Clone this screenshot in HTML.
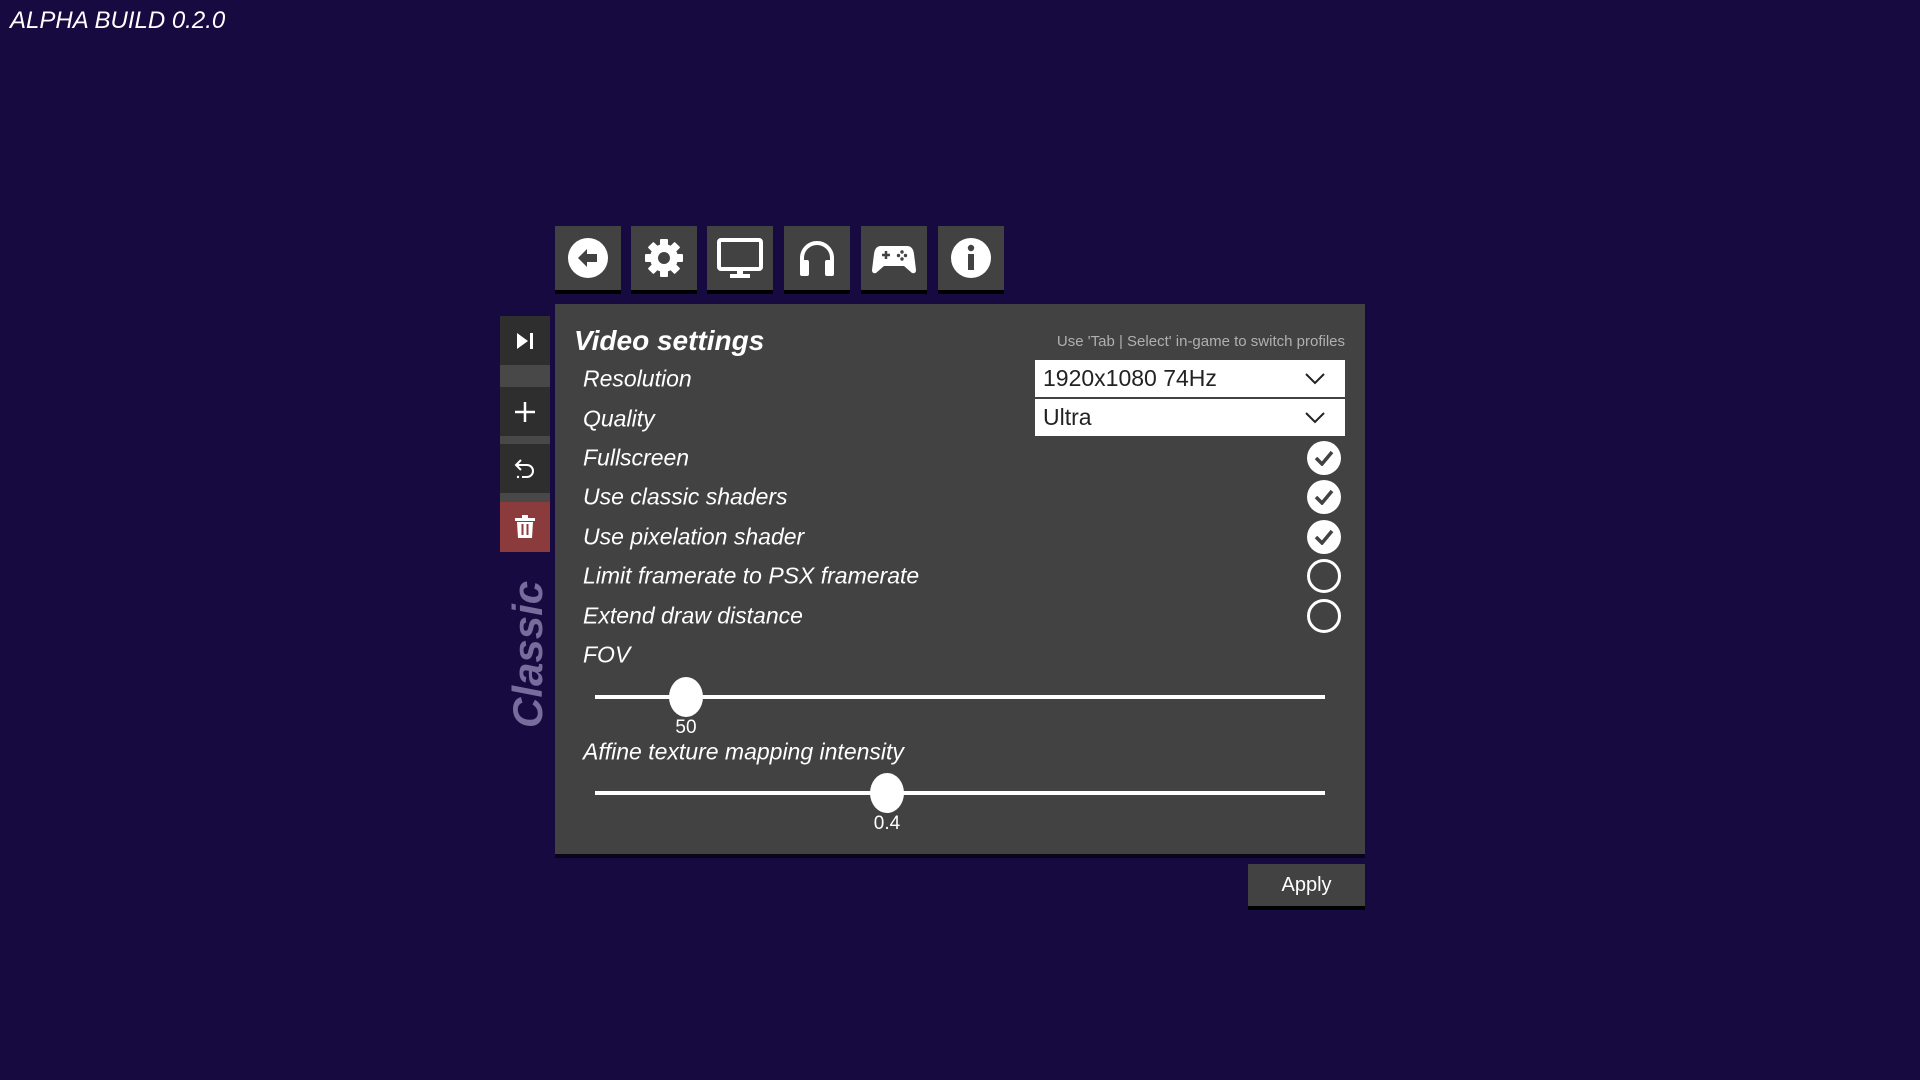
<!DOCTYPE html>
<html><head><meta charset="utf-8"><style>
*{margin:0;padding:0;box-sizing:border-box}
body{width:1920px;height:1080px;background:#170a40;position:relative;overflow:hidden;font-family:"Liberation Sans Narrow","Liberation Sans",sans-serif;color:#fff}
.abs{position:absolute}
.title{left:10px;top:7px;font-size:24px;font-style:italic;color:#fff}
.tab{top:226px;width:66px;height:68px;background:#424242;border-bottom:4px solid #000;display:flex;align-items:center;justify-content:center}
.panel{left:555px;top:304px;width:810px;height:554px;background:#424242;border-bottom:4px solid #0a0418}
.sb{left:500px;width:50px;background:#2e2e2e;display:flex;align-items:center;justify-content:center}
.lbl{left:583px;font-size:23px;font-style:italic;transform:translateY(-50%);white-space:nowrap}
.dd{left:1035px;width:310px;height:37px;background:#fff;color:#222;font-size:23px;padding-left:8px;line-height:37px}
.dd svg{position:absolute;right:20px;top:13px}
.cb{left:1307px;width:34px;height:34px;border-radius:50%;transform:translateY(-50%)}
.cb.on{background:#fff;display:flex;align-items:center;justify-content:center}
.cb.off{border:3px solid #fff}
.track{left:595px;width:730px;height:4px;background:#fff}
.thumb{width:34px;height:40px;border-radius:50%;background:#fff}
.val{font-size:19px;transform:translateX(-50%)}
</style></head><body>
<div class="abs title">ALPHA BUILD 0.2.0</div>

<div class="abs tab" style="left:555px"><svg width="44" height="44" viewBox="0 0 44 44"><circle cx="22" cy="22" r="20" fill="#fff"/><path d="M12 22 L21 13 L21 18 L31 18 L31 26 L21 26 L21 31 Z" fill="#424242"/></svg></div>
<div class="abs tab" style="left:631px"><svg width="44" height="44" viewBox="0 0 44 44"><g fill="#fff"><circle cx="22" cy="22" r="14"/><rect x="18" y="3" width="8" height="38" rx="1"/><rect x="18" y="3" width="8" height="38" rx="1" transform="rotate(45 22 22)"/><rect x="18" y="3" width="8" height="38" rx="1" transform="rotate(90 22 22)"/><rect x="18" y="3" width="8" height="38" rx="1" transform="rotate(135 22 22)"/></g><circle cx="22" cy="22" r="6" fill="#424242"/></svg></div>
<div class="abs tab" style="left:707px"><svg width="48" height="44" viewBox="0 0 48 44"><rect x="3" y="4" width="42" height="29" rx="2" fill="none" stroke="#fff" stroke-width="4"/><rect x="21" y="33" width="6" height="6" fill="#fff"/><rect x="14" y="38" width="20" height="4" fill="#fff"/></svg></div>
<div class="abs tab" style="left:784px"><svg width="44" height="44" viewBox="0 0 44 44"><path d="M7 36 V22 A15 15 0 0 1 37 22 V36" fill="none" stroke="#fff" stroke-width="4"/><rect x="5" y="24" width="9" height="16" rx="2" fill="#fff"/><rect x="30" y="24" width="9" height="16" rx="2" fill="#fff"/></svg></div>
<div class="abs tab" style="left:861px"><svg width="46" height="40" viewBox="0 0 46 40"><path d="M10 8 H36 Q42 8 43 16 L45 32 Q45 36 41 35 L33 28 H13 L5 35 Q1 36 1 32 L3 16 Q4 8 10 8Z" fill="#fff"/><path d="M11 17 H19 M15 13 V21" stroke="#424242" stroke-width="2.5"/><circle cx="31" cy="14" r="1.7" fill="#424242"/><circle cx="31" cy="21" r="1.7" fill="#424242"/><circle cx="27.5" cy="17.5" r="1.7" fill="#424242"/><circle cx="34.5" cy="17.5" r="1.7" fill="#424242"/></svg></div>
<div class="abs tab" style="left:938px"><svg width="44" height="44" viewBox="0 0 44 44"><circle cx="22" cy="22" r="20" fill="#fff"/><circle cx="22" cy="12" r="3.2" fill="#424242"/><rect x="19" y="18" width="6" height="16" fill="#424242"/></svg></div>

<div class="abs" style="left:500px;top:316px;width:50px;height:236px;background:#484848;border-bottom:4px solid #0a0418"></div>
<div class="abs sb" style="top:316px;height:49px"><svg width="20" height="18" viewBox="0 0 20 18"><path d="M2 1 L13 9 L2 17Z" fill="#fff"/><rect x="15" y="1" width="3" height="16" fill="#fff"/></svg></div>
<div class="abs sb" style="top:387px;height:49px"><svg width="22" height="22" viewBox="0 0 22 22"><path d="M11 1V21M1 11H21" stroke="#fff" stroke-width="2.5"/></svg></div>
<div class="abs sb" style="top:444px;height:49px"><svg width="24" height="24" viewBox="0 0 24 24"><path d="M8 3 L3 8 L8 13" fill="none" stroke="#fff" stroke-width="2"/><path d="M3 8 H14 A6 6 0 0 1 14 20 H9" fill="none" stroke="#fff" stroke-width="2"/><circle cx="5" cy="20" r="1.2" fill="#fff"/></svg></div>
<div class="abs sb" style="top:502px;height:50px;background:#8b3b3b"><svg width="22" height="24" viewBox="0 0 22 24"><rect x="1" y="3" width="20" height="3" fill="#fff"/><rect x="8" y="0" width="6" height="3" fill="#fff"/><path d="M3 7 H19 L18 23 H4Z" fill="#fff"/><rect x="7.5" y="9" width="2" height="11" fill="#8b3b3b"/><rect x="12.5" y="9" width="2" height="11" fill="#8b3b3b"/></svg></div>
<div class="abs" style="left:505px;top:728px;transform:rotate(-90deg);transform-origin:0 0;font-family:'Liberation Sans',sans-serif;font-weight:bold;font-style:italic;font-size:42px;color:#776c9c;white-space:nowrap;line-height:46px">Classic</div>

<div class="abs panel"></div>
<div class="abs" style="left:574px;top:325px;font-size:28px;font-weight:bold;font-style:italic">Video settings</div>
<div class="abs" style="right:575px;top:333px;font-size:15px;color:#b0b0b0">Use 'Tab | Select' in-game to switch profiles</div>

<div class="abs lbl" style="top:379px">Resolution</div>
<div class="abs lbl" style="top:419px">Quality</div>
<div class="abs lbl" style="top:458px">Fullscreen</div>
<div class="abs lbl" style="top:497px">Use classic shaders</div>
<div class="abs lbl" style="top:537px">Use pixelation shader</div>
<div class="abs lbl" style="top:576px">Limit framerate to PSX framerate</div>
<div class="abs lbl" style="top:616px">Extend draw distance</div>
<div class="abs lbl" style="top:655px">FOV</div>
<div class="abs lbl" style="top:752px">Affine texture mapping intensity</div>

<div class="abs dd" style="top:360px">1920x1080 74Hz<svg width="20" height="12" viewBox="0 0 20 12"><path d="M1 1 L10 10 L19 1" fill="none" stroke="#222" stroke-width="2"/></svg></div>
<div class="abs dd" style="top:399px">Ultra<svg width="20" height="12" viewBox="0 0 20 12"><path d="M1 1 L10 10 L19 1" fill="none" stroke="#222" stroke-width="2"/></svg></div>

<div class="abs cb on" style="top:458px"><svg width="20" height="16" viewBox="0 0 20 16"><path d="M2 8 L8 14 L18 2" fill="none" stroke="#424242" stroke-width="3.5"/></svg></div>
<div class="abs cb on" style="top:497px"><svg width="20" height="16" viewBox="0 0 20 16"><path d="M2 8 L8 14 L18 2" fill="none" stroke="#424242" stroke-width="3.5"/></svg></div>
<div class="abs cb on" style="top:537px"><svg width="20" height="16" viewBox="0 0 20 16"><path d="M2 8 L8 14 L18 2" fill="none" stroke="#424242" stroke-width="3.5"/></svg></div>
<div class="abs cb off" style="top:576px"></div>
<div class="abs cb off" style="top:616px"></div>

<div class="abs track" style="top:695px"></div>
<div class="abs thumb" style="left:669px;top:677px"></div>
<div class="abs val" style="left:686px;top:717px">50</div>
<div class="abs track" style="top:791px"></div>
<div class="abs thumb" style="left:870px;top:773px"></div>
<div class="abs val" style="left:887px;top:813px">0.4</div>

<div class="abs" style="left:1248px;top:864px;width:117px;height:46px;background:#424242;border-bottom:4px solid #000;font-size:20px;text-align:center;line-height:42px">Apply</div>
</body></html>
